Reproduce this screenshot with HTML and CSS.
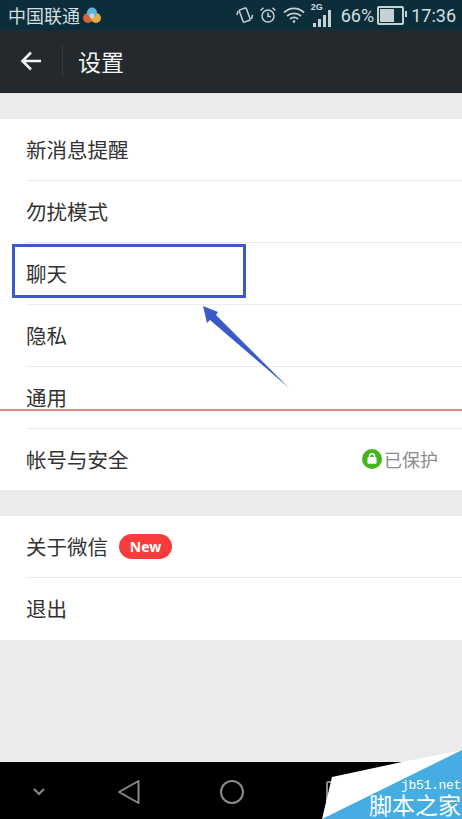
FILE: index.html
```html
<!DOCTYPE html>
<html lang="zh-CN">
<head>
    <meta charset="UTF-8">
    <meta name="viewport" content="width=device-width, initial-scale=1.0">
    <title>设置</title>
    <link rel="stylesheet" href="styles.css">
</head>
<body>
    <div class="screen">
        <div class="status-bar">
            <div class="status-left">
                <span>中国联通</span>
                <svg class="carrier-icon" width="18" height="17" viewBox="0 0 18 17">
                    <circle cx="5" cy="11" r="5" fill="#d9623a"/>
                    <circle cx="13" cy="11" r="5" fill="#e2ac3f"/>
                    <circle cx="9" cy="5.500" r="5" fill="#5fb4dc"/>
                    <circle cx="9" cy="9" r="2.400" fill="#c9d8d8"/>
                </svg>
            </div>
            <div class="status-right">
                <svg width="18" height="20" viewBox="0 0 18 20" fill="none" stroke="#c4d2d4" stroke-width="1.5">
                    <rect x="5" y="3.500" width="7.500" height="13" rx="1" transform="rotate(-20 9 10)"/>
                    <path d="M2 6l-1 4M16.500 10l-1 4"/>
                </svg>
                <svg width="18" height="18" viewBox="0 0 18 18" fill="none" stroke="#c4d2d4" stroke-width="1.5">
                    <circle cx="9" cy="10" r="6"/>
                    <path d="M9 6.500V10.500H12M1.500 4.500L4.500 1.800M16.500 4.500L13.500 1.800"/>
                </svg>
                <svg width="24" height="18" viewBox="0 0 24 18" fill="none" stroke="#c4d2d4" stroke-width="1.7">
                    <path d="M2 6.500C8 1 16 1 22 6.500M5 10C9 6.500 15 6.500 19 10M8 13C10.500 11 13.500 11 16 13"/>
                    <circle cx="12" cy="15.500" r="1.300" fill="#c4d2d4" stroke="none"/>
                </svg>
                <div class="signal">
                    <span class="signal-label">2G</span>
                    <div class="signal-bars">
                        <i class="bar-1"></i><i class="bar-2"></i><i class="bar-3"></i><i class="bar-4"></i>
                    </div>
                </div>
                <span class="battery-text">66%</span>
                <div class="battery"><div class="battery-fill"></div></div>
                <span class="clock">17:36</span>
            </div>
        </div>

        <div class="toolbar">
            <svg class="back-icon" width="22" height="20" viewBox="0 0 22 20" fill="none" stroke="#f4f5f5" stroke-width="2.600">
                <path d="M21 10H2M11 1.500L2.500 10L11 18.500"/>
            </svg>
            <div class="toolbar-divider"></div>
            <div class="toolbar-title">设置</div>
        </div>

        <div class="content">
            <div class="group">
                <div class="row">新消息提醒</div>
                <div class="row">勿扰模式</div>
                <div class="row">聊天</div>
                <div class="row">隐私</div>
                <div class="row">通用</div>
                <div class="row row-split">
                    <span>帐号与安全</span>
                    <span class="protected">
                        <svg width="20" height="20" viewBox="0 0 20 20">
                            <circle cx="10" cy="10" r="10" fill="#45b51f"/>
                            <rect x="5.500" y="8" width="9" height="6.800" rx="1" fill="#fff"/>
                            <path d="M7.500 8.500V7.300a2.500 2.500 0 0 1 5 0V8.500" fill="none" stroke="#fff" stroke-width="1.400"/>
                        </svg>
                        已保护
                    </span>
                </div>
            </div>
            <div class="group">
                <div class="row">
                    <span>关于微信</span>
                    <span class="badge">New</span>
                </div>
                <div class="row">退出</div>
            </div>
        </div>

        <div class="nav-bar">
            <svg width="16" height="10" viewBox="0 0 16 10" fill="none" stroke="#8a8a8a" stroke-width="2">
                <path d="M3 2L8 7L13 2"/>
            </svg>
            <svg class="nav-back" width="24" height="26" viewBox="0 0 24 26" fill="none" stroke="#8a8a8a" stroke-width="2">
                <path d="M21.500 2V24L2 13Z" stroke-linejoin="round"/>
            </svg>
            <svg class="nav-home" width="26" height="26" viewBox="0 0 26 26" fill="none" stroke="#8a8a8a" stroke-width="2">
                <circle cx="13" cy="13" r="11"/>
            </svg>
            <svg class="nav-recent" width="24" height="24" viewBox="0 0 24 24" fill="none" stroke="#8a8a8a" stroke-width="2">
                <rect x="2" y="2" width="20" height="20" rx="1"/>
            </svg>
        </div>

        <!-- annotations drawn over the screenshot -->
        <div class="mark-box"></div>
        <svg class="mark-arrow" width="90" height="90" viewBox="0 0 90 90">
            <path d="M1 1L16 7L14 10L87 83L8 15L5 18Z" fill="#3a5bc7"/>
        </svg>
        <div class="mark-line"></div>

        <svg class="corner" width="140" height="69" viewBox="0 0 140 69">
            <path d="M0 69L10 27L80 12L140 0V69Z" fill="#fff"/>
            <path d="M0 69L140 0V69Z" fill="#45ade2"/>
        </svg>
        <div class="corner-text">
            <div class="corner-url">jb51.net</div>
            <div class="corner-name">脚本之家</div>
        </div>
    </div>
</body>
</html>
```

FILE: styles.css
```css
body {
    margin: 0;
    font-family: "Noto Sans CJK SC", "Noto Sans", sans-serif;
}
.screen {
    position: relative;
    width: 462px;
    height: 819px;
    display: flex;
    flex-direction: column;
    overflow: hidden;
    background-color: #ebebeb;
}

/* Status bar */
.status-bar {
    height: 30px;
    display: flex;
    justify-content: space-between;
    align-items: center;
    padding: 0 6px 0 8px;
    background-color: #0b2e3a;
    color: #d3dfe1;
    font-size: 18px;
}
.status-left, .status-right {
    display: flex;
    align-items: center;
}
.carrier-icon {
    margin-left: 3px;
}
.status-right svg {
    margin-right: 5px;
}
.signal {
    position: relative;
    width: 22px;
    height: 26px;
    margin-right: 8px;
}
.signal-label {
    position: absolute;
    left: 0;
    top: 0;
    font-family: "Liberation Sans", sans-serif;
    font-size: 9px;
    font-weight: bold;
    line-height: 10px;
}
.signal-bars {
    position: absolute;
    left: 2px;
    bottom: 1px;
    display: flex;
    align-items: flex-end;
    gap: 2px;
}
.signal-bars i {
    width: 3px;
    background-color: #c4d2d4;
}
.bar-1 { height: 4px; }
.bar-2 { height: 8px; }
.bar-3 { height: 12px; }
.bar-4 { height: 17px; }
.battery-text {
    font-family: "Roboto", sans-serif;
    font-size: 18px;
}
.battery {
    position: relative;
    width: 21px;
    height: 13px;
    margin: 0 7px 0 3px;
    padding: 1px;
    border: 2px solid #c4d2d4;
    border-radius: 2px;
}
.battery::after {
    content: "";
    position: absolute;
    right: -5px;
    top: 3px;
    width: 2px;
    height: 6px;
    background-color: #c4d2d4;
}
.battery-fill {
    width: 66%;
    height: 100%;
    background-color: #c4d2d4;
}
.clock {
    font-family: "Roboto", sans-serif;
    font-size: 18px;
}

/* Toolbar */
.toolbar {
    height: 63px;
    display: flex;
    align-items: center;
    background-color: #23292c;
    box-sizing: border-box;
    border-bottom: 1px solid #1a1e20;
}
.back-icon {
    margin-left: 20px;
}
.toolbar-divider {
    width: 1px;
    height: 32px;
    margin-left: 20px;
    background-color: #32393c;
}
.toolbar-title {
    margin-left: 15px;
    color: #f2f3f3;
    font-size: 23px;
}

/* Settings list */
.content {
    flex: 1;
    display: flex;
    flex-direction: column;
    gap: 26px;
    padding-top: 26px;
}
.group {
    background-color: white;
}
.row {
    height: 62px;
    display: flex;
    align-items: center;
    gap: 11px;
    margin-left: 26px;
    padding-bottom: 2px;
    box-sizing: border-box;
    border-bottom: 1px solid #ececec;
    color: #333;
    font-size: 20.500px;
}
.row:last-child {
    border-bottom: none;
}
.row-split {
    height: 61px;
    justify-content: space-between;
    padding-right: 24px;
}
.protected {
    display: flex;
    align-items: center;
    gap: 2px;
    color: #8a8a8a;
    font-size: 18px;
}
.badge {
    width: 53px;
    height: 25px;
    margin-top: 2px;
    border-radius: 13px;
    background-color: #f83c3c;
    color: white;
    font-family: "Noto Sans", sans-serif;
    font-size: 14px;
    font-weight: bold;
    line-height: 25px;
    text-align: center;
}

/* Nav bar */
.nav-bar {
    height: 57px;
    display: flex;
    align-items: center;
    padding: 3px 0 0 31px;
    box-sizing: border-box;
    background-color: black;
}
.nav-back {
    margin-left: 70px;
}
.nav-home {
    margin-left: 78px;
}
.nav-recent {
    margin-left: 80px;
}

/* Annotations */
.mark-box {
    position: absolute;
    left: 12px;
    top: 244px;
    width: 234px;
    height: 54px;
    box-sizing: border-box;
    border: 3px solid #3a5bc7;
}
.mark-arrow {
    position: absolute;
    left: 202px;
    top: 305px;
}
.mark-line {
    position: absolute;
    left: 0;
    top: 409px;
    width: 462px;
    height: 2px;
    background-color: #e58a8a;
}

/* Corner watermark */
.corner {
    position: absolute;
    right: 0;
    bottom: 0;
}
.corner-text {
    position: absolute;
    right: 1px;
    bottom: 0;
    color: white;
    text-align: right;
}
.corner-url {
    font-family: "Liberation Mono", monospace;
    font-size: 13px;
    line-height: 14px;
    letter-spacing: -0.300px;
}
.corner-name {
    font-family: "Liberation Sans", "Noto Sans CJK SC", sans-serif;
    font-size: 23px;
    line-height: 26px;
}
```
